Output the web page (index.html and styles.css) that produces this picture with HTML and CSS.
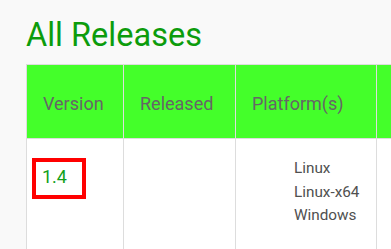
FILE: index.html
```html
<!DOCTYPE html>
<html>
<head>
<meta charset="utf-8">
<link rel="stylesheet" href="styles.css">
</head>
<body>
<div class="page">
  <h1 class="title">All Releases</h1>
  <table class="releases">
    <thead>
      <tr>
        <th class="c1">Version</th>
        <th class="c2">Released</th>
        <th class="c3">Platform(s)</th>
        <th class="c4"></th>
      </tr>
    </thead>
    <tbody>
      <tr>
        <td class="ver"><a class="ver-link" href="#">1.4</a></td>
        <td></td>
        <td class="plat">
          <ul class="plat-list">
            <li>Linux</li>
            <li>Linux-x64</li>
            <li>Windows</li>
          </ul>
        </td>
        <td></td>
      </tr>
    </tbody>
  </table>
</div>
</body>
</html>
```
FILE: styles.css
```css
html, body {
  margin: 0;
  padding: 0;
  background: #f9f9f9;
  overflow: hidden;
  font-family: Roboto, "Liberation Sans", sans-serif;
}
.page {
  padding: 16px 0 0 26px;
  width: 600px;
}
.title {
  margin: 0 0 10px 0;
  font-size: 32.5px;
  line-height: 38px;
  font-weight: 400;
  color: #0c9c0c;
}
.releases {
  border-collapse: separate;
  border-spacing: 0;
  table-layout: fixed;
  width: 501px;
  border-left: 1px solid #dddddd;
  border-top: 1px solid #dddddd;
  background: #ffffff;
}
.releases th,
.releases td {
  box-sizing: border-box;
  border-right: 1px solid #dddddd;
  border-bottom: 1px solid #dddddd;
  vertical-align: top;
  text-align: left;
}
.releases th {
  background: #44ff2a;
  color: #666666;
  font-size: 18px;
  font-weight: 400;
  line-height: 21px;
  padding: 28px 16px 24px 16px;
}
.c1 { width: 97px; }
.c2 { width: 112px; }
.c3 { width: 141px; }
.c4 { width: 151px; }
.releases td {
  padding: 18px 16px 24px 16px;
}
.releases td.ver {
  padding: 19px 0 0 5px;
}
.ver-link {
  display: inline-block;
  box-sizing: content-box;
  border: 4px solid #ff0000;
  color: #12a01a;
  text-decoration: none;
  font-size: 18px;
  line-height: 24px;
  padding: 3px 14px 0 6px;
  height: 30px;
  width: 26px;
}
.plat-list {
  list-style: none;
  margin: 0;
  padding: 0 0 0 42px;
  color: #505050;
  font-size: 15.3px;
  line-height: 23.5px;
}
```
